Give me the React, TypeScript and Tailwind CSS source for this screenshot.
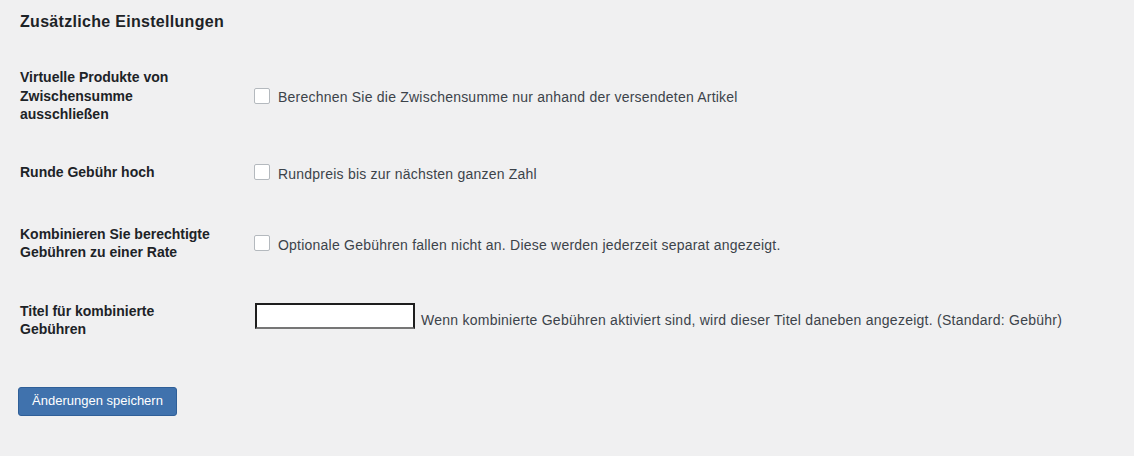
import React from 'react';

const rows = [
  {
    label: ['Virtuelle Produkte von', 'Zwischensumme', 'ausschließen'],
    text: 'Berechnen Sie die Zwischensumme nur anhand der versendeten Artikel',
    pad: 'py-5',
  },
  {
    label: ['Runde Gebühr hoch'],
    text: 'Rundpreis bis zur nächsten ganzen Zahl',
    pad: 'pt-[18px] pb-[22px]',
  },
  {
    label: ['Kombinieren Sie berechtigte', 'Gebühren zu einer Rate'],
    text: 'Optionale Gebühren fallen nicht an. Diese werden jederzeit separat angezeigt.',
    pad: 'py-5',
  },
];

function Label({ lines }: { lines: string[] }) {
  return (
    <div className="w-[234px] shrink-0 text-[14px] leading-[18.5px] font-semibold text-[#1d2327]">
      {lines.map((l) => (
        <div key={l}>{l}</div>
      ))}
    </div>
  );
}

export default function App() {
  return (
    <div className="min-h-[456px] bg-[#f0f0f1] px-5 font-['Liberation_Sans',Arial,sans-serif]">
      {/* Kopfzeile */}
      <h2 className="pt-[12px] text-[16px] leading-[20px] font-semibold tracking-[0.3px] text-[#1d2327]">
        Zusätzliche Einstellungen
      </h2>

      <div className="mt-[16px]">
        {rows.map((r) => (
          <div key={r.text} className={`flex items-center ${r.pad}`}>
            <Label lines={r.label} />
            <label className="flex items-center gap-2 text-[14px] tracking-[0.22px] text-[#3c434a]">
              <span className="block h-4 w-4 rounded-[2px] border border-[#b4b9be] bg-white"></span>
              <span className="relative top-[2px]">{r.text}</span>
            </label>
          </div>
        ))}

        <div className="flex items-center py-5">
          <Label lines={['Titel für kombinierte', 'Gebühren']} />
          <div className="mb-2 flex items-center gap-[6px] text-[14px] tracking-[0.25px] text-[#3c434a]">
            <input
              type="text"
              className="ml-px h-[26px] w-[160px] border-2 border-[#1e1e1e] border-b-[#767676] bg-white outline-none"
            />
            <span className="relative top-[4px]">
              Wenn kombinierte Gebühren aktiviert sind, wird dieser Titel daneben angezeigt. (Standard: Gebühr)
            </span>
          </div>
        </div>
      </div>

      <button className="-ml-[2px] mt-[28px] h-[29px] w-[159px] rounded-[3px] border border-[#2f5f98] bg-[#4072ad] text-[13px] text-white">
        Änderungen speichern
      </button>
    </div>
  );
}
